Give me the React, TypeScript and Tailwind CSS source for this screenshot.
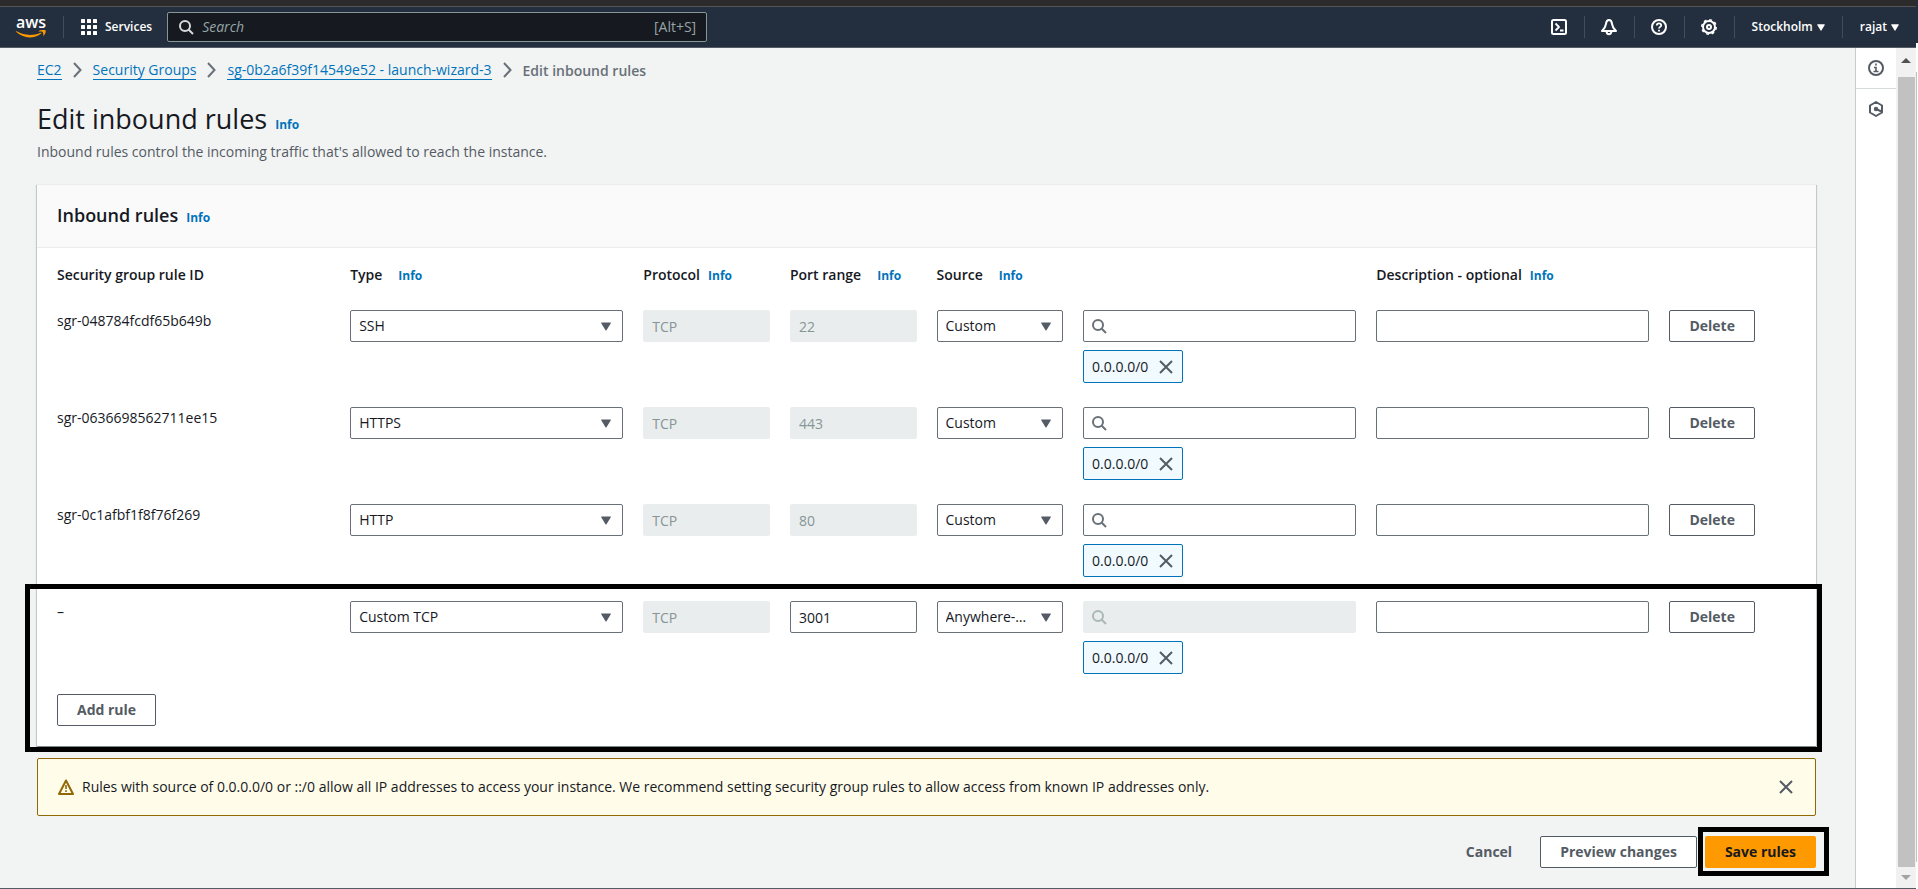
import type { ReactNode } from 'react';

type Rule = {
  id: string;
  type: string;
  port: string;
  portLocked: boolean;
  source: string;
  sourceLocked: boolean;
};

const rules: Rule[] = [
  { id: 'sgr-048784fcdf65b649b', type: 'SSH', port: '22', portLocked: true, source: 'Custom', sourceLocked: false },
  { id: 'sgr-0636698562711ee15', type: 'HTTPS', port: '443', portLocked: true, source: 'Custom', sourceLocked: false },
  { id: 'sgr-0c1afbf1f8f76f269', type: 'HTTP', port: '80', portLocked: true, source: 'Custom', sourceLocked: false },
  { id: '–', type: 'Custom TCP', port: '3001', portLocked: false, source: 'Anywhere-IPv4', sourceLocked: true },
];

const ruleTypes = ['SSH', 'HTTPS', 'HTTP', 'Custom TCP'];
const sources = ['Custom', 'Anywhere-IPv4'];

const fieldClass =
  'h-8 w-full rounded-xs border border-[#687078] bg-white px-2 text-[#16191f] disabled:border-[#eaeded] disabled:bg-[#e9eded] disabled:text-[#879596]';

const SearchIcon = ({ className }: { className?: string }) => (
  <svg viewBox="0 0 16 16" className={`size-4 ${className ?? ''}`} fill="none" stroke="currentColor" strokeWidth="2">
    <circle cx="7" cy="7" r="5" />
    <path d="m15 15-4.5-4.5" />
  </svg>
);

const CloseIcon = () => (
  <svg viewBox="0 0 16 16" className="size-4" fill="none" stroke="currentColor" strokeWidth="2">
    <path d="m2 2 12 12M14 2 2 14" />
  </svg>
);

const Caret = ({ className }: { className?: string }) => (
  <svg viewBox="0 0 10 9" className={className} fill="currentColor">
    <path d="M.6.4h8.8c.4 0 .6.4.4.8L5.5 8.3c-.2.4-.8.4-1 0L.2 1.2C0 .8.2.4.6.4z" />
  </svg>
);

const InfoLink = () => (
  <a href="#info" className="text-xs font-bold text-[#0073bb]">
    Info
  </a>
);

const AwsLogo = () => (
  <svg viewBox="0 -6 32 32" className="size-8 overflow-visible">
    <text x="1" y="11" fontSize="16" fontWeight="600" fill="#ffffff" fontFamily="Open Sans, sans-serif">
      aws
    </text>
    <g fill="#ff9900" transform="translate(0 -1)">
      <path d="M.8 15.4c.2-.3.5-.3.8-.1 4 2.3 8.7 3.6 13.4 3.6 3.5 0 7.3-.7 10.7-2.2.6-.2 1 .4.4.8-3 2.7-7.500 3.900-11.300 3.900-5.300 0-10.200-2.200-13.800-5.600-.2-.1-.3-.3-.2-.4z" />
      <path d="M27.4 15.7c-.4-.5-2.600-.3-3.600-.1-.3 0-.4-.3-.1-.5 1.700-1.200 6.500-1.200 6.900-.6.4.5-.1 3.800-2 5.200-.3.2-.5.1-.4-.2.4-.9 0-3.300-.8-3.800z" />
    </g>
  </svg>
);

const NavIcon = ({ label, children }: { label: string; children: ReactNode }) => (
  <button aria-label={label} className="flex h-[22px] w-[50px] items-center justify-center border-r border-[#414d5c]">
    <svg viewBox="0 0 16 16" className="size-4 overflow-visible" fill="none" stroke="currentColor" strokeWidth="2" strokeLinejoin="round">
      {children}
    </svg>
  </button>
);

const TopNav = () => (
  <header className="flex h-[42px] items-center border-t border-b border-t-[#545454] border-b-[#545b64] bg-[#232f3e] text-xs font-semibold text-white">
    <a href="#home" aria-label="AWS" className="flex h-[22px] items-center border-r border-[#414d5c] pr-4 pl-[15px]">
      <AwsLogo />
    </a>
    <button className="ml-[17px] flex items-center gap-2">
      <svg viewBox="0 0 16 16" className="size-4" fill="currentColor">
        {[0, 6, 12].map((y) => [0, 6, 12].map((x) => <rect key={`${x}-${y}`} x={x} y={y} width="4" height="4" rx="0.5" />))}
      </svg>
      Services
    </button>
    <label className="ml-[15px] flex h-[30px] w-[540px] items-center rounded-xs border border-[#879596] bg-[#16191f] px-[10px] text-sm font-normal text-[#95a5a6]">
      <SearchIcon className="text-[#d5dbdb]" />
      <input
        type="search"
        aria-label="Search"
        placeholder="Search"
        className="ml-2 min-w-0 flex-1 bg-transparent outline-none placeholder:text-[#95a5a6] placeholder:italic"
      />
      <span>[Alt+S]</span>
    </label>
    <div className="ml-auto flex items-center">
      <NavIcon label="CloudShell">
        <rect x="1" y="1" width="14" height="14" rx="1.5" />
        <path d="m4.500 4.500 3.500 3.500-3.500 3.500M9 11.500h3.500" strokeWidth="1.800" />
      </NavIcon>
      <NavIcon label="Notifications">
        <path d="M8 1C6 1 5.200 2.600 5 4.800 4.700 7.800 3.400 9.600 1 12h14c-2.400-2.400-3.700-4.200-4-7.200C10.800 2.600 10 1 8 1z" />
        <path d="M5.600 12.500c0 3.600 4.800 3.600 4.800 0" />
      </NavIcon>
      <NavIcon label="Help">
        <circle cx="8" cy="8" r="7" />
        <path d="M5.800 6.600c0-3 4.400-2.800 4.400-.2C10.200 7.800 8 8 8 9.600M8 10.800v1.800" strokeWidth="1.800" />
      </NavIcon>
      <NavIcon label="Settings">
        <circle cx="8" cy="8" r="6" />
        <circle cx="8" cy="8" r="7.200" strokeWidth="1.600" strokeDasharray="2.830 2.825" />
        <circle cx="8" cy="8" r="2" />
      </NavIcon>
      <button className="flex h-[22px] items-center gap-1 border-r border-[#414d5c] px-[17px]">
        Stockholm
        <Caret className="h-[7px] w-2" />
      </button>
      <button className="flex h-[22px] items-center gap-1 px-[17px]">
        rajat
        <Caret className="h-[7px] w-2" />
      </button>
    </div>
  </header>
);

const Breadcrumbs = () => (
  <nav aria-label="Breadcrumbs" className="flex h-[22px] items-center gap-[11px] leading-[19px]">
    {['EC2', 'Security Groups', 'sg-0b2a6f39f14549e52 - launch-wizard-3'].map((crumb) => (
      <div key={crumb} className="flex items-center gap-[11px]">
        <a href="#crumb" className="border-b border-[#0073bb] text-[#0073bb]">
          {crumb}
        </a>
        <svg viewBox="0 0 9 16" className="h-4 w-[9px]" fill="none" stroke="#687078" strokeWidth="2">
          <path d="m1 1 6.500 7L1 15" />
        </svg>
      </div>
    ))}
    <span className="font-semibold text-[#687078]">Edit inbound rules</span>
  </nav>
);

const SelectField = ({ label, value, options }: { label: string; value: string; options: string[] }) => (
  <div className="relative">
    <select aria-label={label} defaultValue={value} className={`${fieldClass} appearance-none overflow-hidden pr-8 text-ellipsis`}>
      {options.map((option) => (
        <option key={option}>{option}</option>
      ))}
    </select>
    <Caret className="pointer-events-none absolute top-3 right-3 h-[9px] w-2.5 text-[#545b64]" />
  </div>
);

const Button = ({ children }: { children: ReactNode }) => (
  <button className="h-8 rounded-xs border border-[#545b64] bg-white px-[19px] font-bold text-[#545b64]">
    {children}
  </button>
);

const RuleRow = ({ rule }: { rule: Rule }) => (
  <div className="grid grid-cols-12 items-start gap-5">
    <span className="col-span-2 leading-[22px]">{rule.id}</span>
    <div className="col-span-2">
      <SelectField label="Type" value={rule.type} options={ruleTypes} />
    </div>
    <input aria-label="Protocol" defaultValue="TCP" disabled className={fieldClass} />
    <input aria-label="Port range" defaultValue={rule.port} disabled={rule.portLocked} className={fieldClass} />
    <SelectField label="Source" value={rule.source} options={sources} />
    <div className="col-span-2 space-y-2">
      <div className="relative">
        <input aria-label="Source address" disabled={rule.sourceLocked} className={`${fieldClass} pl-8`} />
        <SearchIcon
          className={`pointer-events-none absolute top-2 left-2 ${rule.sourceLocked ? 'text-[#aab7b8]' : 'text-[#687078]'}`}
        />
      </div>
      <div className="flex h-[33px] w-fit items-center gap-2.5 rounded-xs border border-[#0073bb] bg-[#f1faff] px-2">
        0.0.0.0/0
        <button aria-label="Remove 0.0.0.0/0" className="text-[#545b64]">
          <CloseIcon />
        </button>
      </div>
    </div>
    <input aria-label="Description" className={`${fieldClass} col-span-2`} />
    <div>
      <Button>Delete</Button>
    </div>
  </div>
);

const InboundRules = () => (
  <section className="relative mt-[21px] border-t border-[#eaeded] bg-white shadow-[0_1px_1px_0_rgba(0,28,36,0.3),1px_1px_1px_0_rgba(0,28,36,0.15),-1px_1px_1px_0_rgba(0,28,36,0.15)]">
    <div className="flex h-[63px] items-baseline gap-2 border-b border-[#eaeded] bg-[#fafafa] px-5 pt-4">
      <h2 className="text-lg leading-7 font-semibold">Inbound rules</h2>
      <InfoLink />
    </div>
    <div className="px-5 pt-4 pb-5">
      <div className="mb-6 grid grid-cols-12 gap-x-5 leading-[22px] font-semibold whitespace-nowrap">
        <div className="col-span-2">Security group rule ID</div>
        <div className="col-span-2 flex items-baseline gap-4">
          Type <InfoLink />
        </div>
        <div className="flex items-baseline gap-2">
          Protocol <InfoLink />
        </div>
        <div className="flex items-baseline gap-4">
          Port range <InfoLink />
        </div>
        <div className="col-span-3 flex items-baseline gap-4">
          Source <InfoLink />
        </div>
        <div className="col-span-3 flex items-baseline gap-2">
          Description - optional <InfoLink />
        </div>
      </div>
      <div className="mb-5 space-y-6">
        {rules.map((rule) => (
          <RuleRow key={rule.id} rule={rule} />
        ))}
      </div>
      <Button>Add rule</Button>
    </div>
    {/* highlight around the new rule */}
    <div className="pointer-events-none absolute -right-1.5 -bottom-1.5 -left-3 h-[168px] border-[5px] border-black" />
  </section>
);

const Warning = () => (
  <div role="alert" className="mt-3 flex h-[58px] items-center gap-2 rounded-xs border border-[#906806] bg-[#fffce9] pr-[21px] pl-5">
    <svg viewBox="0 0 16 16" className="size-4" fill="none" stroke="#906806" strokeWidth="2" strokeLinejoin="round">
      <path d="M8 1.500 15 15H1z" />
      <path d="M8 6v4M8 11.200v1.800" strokeWidth="1.600" />
    </svg>
    <p className="flex-1">
      Rules with source of 0.0.0.0/0 or ::/0 allow all IP addresses to access your instance. We recommend setting
      security group rules to allow access from known IP addresses only.
    </p>
    <button aria-label="Dismiss" className="text-[#545b64]">
      <CloseIcon />
    </button>
  </div>
);

const Actions = () => (
  <div className="mt-5 flex items-center justify-end gap-2">
    <button className="h-8 px-5 font-bold text-[#545b64]">Cancel</button>
    <Button>Preview changes</Button>
    <div className="relative">
      <button className="h-8 rounded-xs bg-[#ff9900] px-5 font-bold text-[#16191f]">Save rules</button>
      <div className="pointer-events-none absolute -top-[9px] -right-[13px] -bottom-2 -left-[7px] border-[5px] border-black" />
    </div>
  </div>
);

const SidePanel = () => (
  <aside className="w-[41px] border-l border-[#c6cccc] bg-white text-[#545b64]">
    <button aria-label="Info panel" className="flex h-[41px] w-full items-center justify-center border-b border-[#d5dbdb]">
      <svg viewBox="0 0 16 16" className="size-4" fill="none" stroke="currentColor" strokeWidth="2">
        <circle cx="8" cy="8" r="7" />
        <path d="M8 3.500v2M6 7.500h2V11M5.500 11.500h5" strokeWidth="1.600" />
      </svg>
    </button>
    <button aria-label="Tutorials" className="flex h-10 w-full items-center justify-center">
      <svg viewBox="0 0 16 16" className="size-4" fill="none" stroke="currentColor" strokeWidth="2" strokeLinejoin="round">
        <path d="M8 1l6 3.500v7L8 15l-6-3.500v-7z" />
        <path d="m8 8 5.500 2.500" />
        <circle cx="8" cy="8" r="1.200" fill="currentColor" />
      </svg>
    </button>
  </aside>
);

const ScrollBar = () => (
  <div className="flex w-5 flex-col items-center bg-[#f1f1f1]">
    <div className="flex h-[29px] items-center pb-4">
      <svg viewBox="0 0 10 5" className="mt-3 h-[5px] w-2.5" fill="#505050">
        <path d="M0 5 5 0l5 5z" />
      </svg>
    </div>
    <div className="w-[17px] flex-1 bg-[#c1c1c1]" />
    <div className="flex h-[21px] items-center">
      <svg viewBox="0 0 10 5" className="h-[5px] w-2.5" fill="#a3a3a3">
        <path d="m0 0 5 5 5-5z" />
      </svg>
    </div>
  </div>
);

const App = () => (
  <div className="flex min-h-screen bg-white font-['Open_Sans',sans-serif] text-sm text-[#16191f]">
    <div className="flex min-w-0 flex-1 flex-col border-b border-[#545b64]">
      <div className="h-1.5 bg-[#2b2b2b]" />
      <TopNav />
      <div className="flex flex-1">
        <main className="min-w-0 flex-1 bg-[#f2f3f3] pt-[11px] pr-[39px] pb-5 pl-[37px]">
          <Breadcrumbs />
          <div className="mt-5 flex items-baseline gap-2">
            <h1 className="text-[27px] leading-9">Edit inbound rules</h1>
            <InfoLink />
          </div>
          <p className="mt-1 leading-[22px] text-[#545b64]">
            Inbound rules control the incoming traffic that's allowed to reach the instance.
          </p>
          <InboundRules />
          <Warning />
          <Actions />
        </main>
        <SidePanel />
        <ScrollBar />
      </div>
    </div>
    {/* window edge */}
    <div className="flex w-0.5 flex-col">
      <div className="h-[43px] bg-[#232f3e]" />
      <div className="mt-[29px] mb-[27px] flex-1 border-l border-[#c1c1c1]" />
    </div>
  </div>
);

export default App;
